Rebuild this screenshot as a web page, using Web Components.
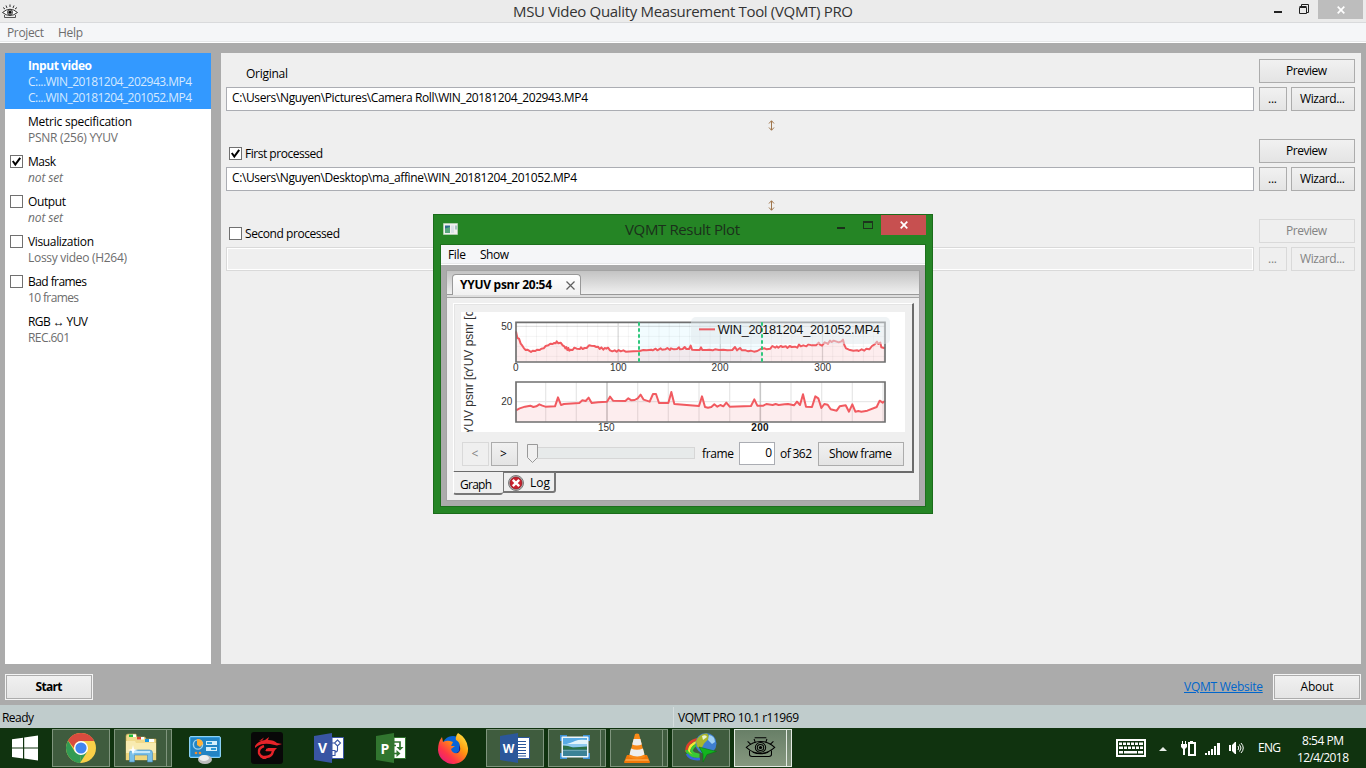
<!DOCTYPE html>
<html lang="en">
<head>
<meta charset="utf-8">
<title>MSU Video Quality Measurement Tool</title>
<style>
html,body{margin:0;padding:0;width:1366px;height:768px;overflow:hidden}
body{font:12px/16px "Open Sans","Noto Sans",sans-serif;color:#000}
</style>
</head>
<body>
<vq-app></vq-app>
<script>
const make = (tag, css, html) => customElements.define(tag, class extends HTMLElement {
  constructor() {
    super();
    this.attachShadow({mode: 'open'}).innerHTML =
      `<style>*{box-sizing:border-box}${css}</style>` + (typeof html === 'function' ? html(this) : html);
  }
});
const pending = [];

/* Text that is tracked to a set advance width. */
customElements.define('vq-text', class extends HTMLElement {
  constructor() {
    super();
    this.attachShadow({mode: 'open'}).innerHTML = '<style>:host{display:inline-block;white-space:pre;flex:none}</style><slot></slot>';
    pending.push(this);
  }
  fit() {
    const w = +this.getAttribute('w'), n = this.textContent.length;
    if (!w || n < 2) return;
    this.style.letterSpacing = (w - this.getBoundingClientRect().width) / (n - 1) + 'px';
    this.style.width = w + 'px';
  }
});

const ICONS = {
  eye: [48, 40, `<g fill="none" stroke="#000" stroke-width="1.6"><path d="M2 19Q12 9 24 9T46 19Q36 29 24 29T2 19Z"/><path d="M7 24v7q0 3 4 3h26q4 0 4-3v-7M4 9l5 5M14 5l2 6M34 5l-2 6M44 9l-5 5M15 3h18"/><circle cx="24" cy="19" r="8"/><circle cx="24" cy="19" r="5"/><path d="M12 27q12 5 24 0"/></g><circle cx="24" cy="19" r="2.500"/>`],
  logo: [16, 15, `<path fill="#fff" d="M1 8.500q7-7 14 0-7 6-14 0Z"/><path fill="none" stroke="#333" stroke-width="1" d="M.5 8.500Q8 2 15.500 8.500 8 14.500.500 8.500ZM1 3.500l2 1.500M4 1.500l1 2.500M8 .500V3M12 1.500 11 4M15 3.500 13 5"/><path fill="none" stroke="#555" d="M2.500 11v2.500h11V11"/><circle cx="8" cy="8.300" r="2.600" fill="#aaa" stroke="#222" stroke-width=".7"/><circle cx="8" cy="8.300" r="1.400"/>`],
  win: [26, 26, `<path fill="#fff" d="M0 4.200 11 2.700V12.400H0ZM12.200 2.500 26 .500V12.400H12.200ZM0 13.600H11V23.500L0 21.900ZM12.200 13.600H26V25.500L12.200 23.600Z"/>`],
  chrome: [30, 30, `<circle cx="15" cy="15" r="15" fill="#f9d048"/><path fill="#329b54" d="M2 7.500 9 19 15 22 14 30A15 15 0 0 1 2 7.500Z"/><path fill="#329b54" d="m14 30 7-11-6 2Z"/><path fill="#d84b3e" d="M2 7.500A15 15 0 0 1 28.200 8H15Q8 9 8 15Z"/><circle cx="15" cy="15" r="7" fill="#fff"/><circle cx="15" cy="15" r="5.600" fill="#4286f0"/>`],
  folder: [32, 30, `<path fill="#f0da8c" stroke="#b9a04d" stroke-width=".6" d="M1 3q0-2 2-2h8l1 3h8l1 2h10V27H1Z"/><path fill="#fff" d="M4 1.500h7V4H4ZM12 4h7v2.500h-7ZM20 6h9v3h-9Z"/><path fill="#20bd3a" d="M4 1.500h4V4H4Z"/><path fill="#dc4530" d="M12 4h4v2.500h-4Z"/><path fill="#1997dd" d="M20 6h4v3h-4Z"/><path fill="#f8ebb0" d="M1 8h9l1 2h20v17H1Z"/><path fill="#eed67d" d="M1 20h30v7H1Z"/><path fill="#79bfe8" stroke="#4588b8" stroke-width=".6" d="M4.500 20q0-3 3-3h17q3 0 3 3v9h-5v-7H9.500v7h-5Z"/><path fill="#c5e8fa" d="M7 18h18v2H7Z"/><path fill="#fff" d="m8 12 1 4 4 1-4 1-1 4-1-4-4-1 4-1Z"/>`],
  panel: [32, 28, `<rect x=".5" y=".5" width="31" height="21" rx="1.500" fill="#329add" stroke="#8bd1f4"/><rect x="2" y="2" width="28" height="18" fill="#2384c4"/><circle cx="9" cy="8.500" r="4.600" fill="none" stroke="#9fd2ee" stroke-width="1.400"/><path fill="#ffb038" d="M8 9V3a5 5 0 0 1 6 5l-3 3Z"/><path fill="#d5effb" d="M17 5h11v4H17ZM17 11h11v4H17Z"/><path fill="#2e9ad6" d="M18 6h5v2h-5ZM22 12h5v2h-5Z"/><circle cx="7" cy="17" r="1.300" fill="#f78d2b"/><circle cx="11" cy="17" r="1.300" fill="#f78d2b"/><ellipse cx="16" cy="23.500" rx="7" ry="4.500" fill="#bdbdbd"/><ellipse cx="15" cy="22" rx="5" ry="3" fill="#eee"/>`],
  garena: [32, 32, `<rect width="32" height="32" rx="3" fill="#080808"/><path fill="#e62329" d="M4 14Q7 9 14 8l4-3-1 3q6 0 9 3l5 1-5 1.500-7-1.500Q11 11 6.500 14l-2.500 2ZM8 9l5-3.500-2 3Z"/><path fill="none" stroke="#e62329" stroke-width="2.400" d="M13 14Q7 16 8 21q1 4 6 4t7-3l1.500-4H15"/><path fill="#e62329" d="m14 19 3-3h9l-3 3ZM9 25l3 2h4l-3-2Z"/>`],
  visio: [30, 30, `<path fill="#fff" stroke="#3955a3" d="M18 4.500h11.500v21H18Z"/><path fill="none" stroke="#3955a3" stroke-width="1.100" d="m23.500 7 3 3-3 3-3-3ZM17 17.500h4v5h-4M23.500 13v4q0 2-2.500 2M18 10h2.500"/><path fill="#3955a3" d="M0 3 18 0v30L0 27Z"/><text x="4" y="20" font-size="14" font-weight="700" fill="#fff">V</text>`],
  project: [30, 30, `<path fill="#fff" stroke="#31752f" d="M18 4.500h11.500v21H18Z"/><path fill="none" stroke="#31752f" stroke-width="1.700" d="M18 9h6v6M18 12.500h2M18 20.500h4"/><path fill="#31752f" d="m20.500 14 3.500 3.500 3.500-3.500ZM20.500 17v7l4-3.500Z"/><path fill="#31752f" d="M0 3 18 0v30L0 27Z"/><text x="4.500" y="20.500" font-size="14" font-weight="700" fill="#fff">P</text>`],
  firefox: [30, 31, `<defs><linearGradient id="f" x1="1" y1="0" x2=".1" y2="1"><stop stop-color="#fff44f"/><stop offset=".4" stop-color="#ff980e"/><stop offset=".72" stop-color="#ff3647"/><stop offset="1" stop-color="#e31587"/></linearGradient></defs><circle cx="15" cy="14" r="11" fill="#0a64d8"/><path fill="#29237c" d="M10 16q5 8 11 2v-6l4 8-9 7-9-6Z"/><path fill="url(#f)" d="M4 4 5 9Q9 7 12 8L15 9 13 13l4 0-4 3q1 5 7 4 3-2 2-6 0-5-4-7Q17 3 20 0q9 5 10 15a15 15 0 0 1-30 2Q0 9 4 4Z"/>`],
  word: [30, 30, `<path fill="#fff" stroke="#2b579a" d="M17 4.500h12.500v21H17Z"/><path stroke="#2b579a" stroke-width="1" d="M18 8.500h8M18 11.500h8M18 14.500h8M18 17.500h8M18 20.500h8M18 23h8"/><path fill="#2b579a" d="M0 3 18 0v30L0 27Z"/><text x="2.800" y="19.500" font-size="12" font-weight="700" fill="#fff">W</text>`],
  photo: [30, 26, `<path fill="#3d91d4" d="M0 1h7v6H0ZM23 1h7v6h-7ZM0 19h7v6H0ZM23 19h7v6h-7Z"/><rect x="1.500" y="2.500" width="27" height="21" rx="1" fill="#eef5f9"/><rect x="3" y="4" width="24" height="18" fill="#58abe4"/><path fill="#e3f4fb" d="M3 11q8-2 12-4t12-1v4H3Z"/><path fill="#8fcaf0" d="M3 10h24v3H3Z"/><path fill="#2c7045" d="M3 11.500q5 0 10 2l14-1v3.500H3Z"/><path fill="#3b8296" d="M3 15.500h24V22H3Z"/><path fill="#6aa3b2" d="M3 16h24v1H3Z"/>`],
  vlc: [26, 30, `<path fill="#f07808" d="M3 22h20l3 7q0 1-1 1H1q-1 0-1-1Z"/><path fill="#f98a18" d="M11 1q2-1 4 0l6 23q-8 4-16 0Z"/><path fill="#eee" d="m9.600 6h6.800l1.400 5.500q-5 2-9.600 0ZM7 15.500q6 2.500 12 0l1.500 6q-7 4-15 0Z"/><path fill="#ffb65f" d="M2 26h22l1 2H1Z" opacity=".6"/>`],
  idm: [32, 30, `<g fill="none" stroke-width="2.600"><path stroke="#e0402a" d="M13 6Q1 9 1.500 19"/><path stroke="#f5e934" d="M14 8.500Q4 11 4 19q1 3 6 4"/><path stroke="#39c935" d="M14 11Q7 13 6.500 18q1 3 8 4M1.500 17q1 6 13 7"/><path stroke="#3569dd" d="M2 21q3 6 13 5"/></g><circle cx="21" cy="10.500" r="10.500" fill="#3f7fd0"/><path fill="#a9b62c" d="M11 8q4-8 11-7.500 3 2 1 6l-4 4-3 6-4-3Z"/><path fill="#9fd0f4" d="M24 2q6 1 6 7l-3 2-4-4Z"/><path fill="#e9f3cf" d="M17 3q4-2 5 1l-4 3Z"/><path fill="#12b51e" stroke="#087512" stroke-width=".6" d="m14 14 17.500 4.500-9.500 3-4 7.500 0-8Z"/>`],
  keyboard: [30, 18, `<path fill="#fff" d="M0 0h30v18H0Z"/><path fill="#10330f" d="M2 2h26v14H2Z"/><path fill="#fff" d="M3 3.500h3v2.500H3zM7 3.500h3v2.500H7zM11 3.500h3v2.500h-3zM15 3.500h3v2.500h-3zM19 3.500h3v2.500h-3zM23 3.500h4v2.500h-4zM3 7.500h4v2.500H3zM8 7.500h3v2.500H8zM12 7.500h3v2.500h-3zM16 7.500h3v2.500h-3zM20 7.500h3v2.500h-3zM24 7.500h3v2.500h-3zM3 12h4v2.500H3zM8 12h13v2.500H8zM22 12h5v2.500h-5z"/>`],
  up: [8, 4, `<path fill="#e7eee7" d="M0 4 4 0l4 4Z"/>`],
  battery: [15, 16, `<path fill="#fff" d="M1 1h1v3h2V1h1v3h1v3L4 9v6H2V9L0 7V4h1ZM9 1h3v1h3v14H7V2h2Z"/><path fill="#10330f" d="M9 4h4v10H9Z"/>`],
  signal: [15, 12, `<path fill="#fff" d="M0 10h2v2H0zM3 8h2v4H3zM6 6h2v6H6zM9 3h2v9H9zM12 0h3v12h-3z"/>`],
  sound: [15, 14, `<path fill="#fff" d="M0 4h2v6H0ZM3 4 6 1h1v12H6L3 10Z"/><path fill="none" stroke="#fff" stroke-width="1" d="M9 5q1.500 2 0 4M10.500 3.500q3 3.500 0 7M12 2q4.500 5 0 10"/>`],
  min: [8, 2, `<path fill="currentColor" d="M0 0h8v2H0z"/>`],
  restore: [10, 10, `<path fill="none" stroke="#222" d="M.5 3.500h7v6h-7zM.5 2.500h7M2.500 2V.500h7V8.500H8"/>`],
  max: [10, 8, `<path fill="#1d331d" d="M0 0h10v8H0zM1 2v5h8V2z" fill-rule="evenodd"/>`],
  close: [8, 8, `<path stroke="#fff" stroke-width="1.700" d="m.7.700 6.600 6.600M7.300.700.700 7.300"/>`],
  tabx: [9, 9, `<path stroke="#606060" stroke-width="1.200" d="m.5.500 8 8M8.500.500l-8 8"/>`],
  app: [15, 12, `<path fill="#f1f1ef" stroke="#b9d0b9" stroke-width=".8" d="M.5.500h14v11H.5z"/><path fill="#2d6b8e" d="M2 2.500h5v7.500H2z"/><path fill="#56a67c" d="M2 5.500 7 4v6H2z"/><path fill="#dbe3e8" d="M8 2.500h3v7.500H8z"/><path fill="#a9c4c4" d="M12 2.500h2v4h-2z"/>`],
  error: [16, 16, `<circle cx="8" cy="8" r="7.500" fill="#b9b9b9" stroke="#7a7a7a"/><circle cx="8" cy="8" r="6" fill="#c9202d" stroke="#8a1620" stroke-width=".7"/><path stroke="#fff" stroke-width="2.400" d="m4.800 4.800 6.400 6.400M11.200 4.800l-6.400 6.400"/>`],
  thumb: [11, 19, `<path fill="#f0f0f0" stroke="#999" d="M.5.500h10v13l-5 5-5-5Z"/>`],
  updown: [7, 11, `<path fill="none" stroke="#a0764c" d="M3.500 1v9M1 3.500l2.500-2.800L6 3.500M1 7.500l2.500 2.800L6 7.500"/>`],
  check: [9, 9, `<path fill="none" stroke="#000" stroke-width="2" d="M.8 4 3.300 7.500 8.200.800"/>`],
};
make('vq-icon', ':host{display:block;flex:none}svg{display:block;overflow:visible;font-family:"Open Sans",sans-serif}', el => {
  const [w, h, body] = ICONS[el.getAttribute('name')];
  return `<svg width="${el.getAttribute('width') || w}" height="${el.getAttribute('height') || h}" viewBox="0 0 ${w} ${h}" preserveAspectRatio="none">${body}</svg>`;
});

make('vq-button', `:host{display:flex;box-sizing:border-box;height:24px;flex:none;align-items:center;justify-content:center;
  border:1px solid #acacac;background:linear-gradient(#f1f1f1,#e4e4e4);padding:0 1px 0 0}
  :host([disabled]){border-color:#d9d9d9;background:#efefef;color:#838383}
  :host([big]){height:26px;box-shadow:inset 0 0 0 1px #acacac;border-color:#f4f4f4;padding:0}`, '<slot></slot>');

make('vq-check', `:host{display:flex;box-sizing:border-box;width:13px;height:13px;border:1px solid #707070;background:#fff;flex:none;align-items:center;justify-content:center}`,
  el => el.hasAttribute('on') ? '<vq-icon name="check"></vq-icon>' : '');

make('vq-step', `:host{display:grid;grid-template-columns:18px 1fr;padding:5px 5px 3px;color:#000}
  :host([selected]){background:#3399ff;color:#fff;--sub:#d5e9ff}
  :host([selected]) .t{font-weight:700}
  .s{color:var(--sub,#6d6d6d)} vq-check{margin-top:1px}`, el => {
  const c = el.getAttribute('check');
  return `<div>${c ? `<vq-check ${c}></vq-check>` : ''}</div><div><div class="t"><slot name="t"></slot></div><div class="s"><slot></slot></div></div>`;
});

make('vq-source', `:host{display:grid;grid-template-columns:1028px 96px;column-gap:5px;row-gap:4px;height:80px;align-content:start}
  .l{display:flex;align-items:center;padding:6px 0 0 3px;height:24px;gap:3px}
  .l vq-check{margin-top:-1px}
  .f{height:24px;border:1px solid #abadb3;background:#fff;padding:2px 5px;line-height:16px}
  :host([off]) .f{background:#efefef;border-color:#d9d9d9;box-shadow:inset 0 0 0 1px #fff}
  .b{display:flex;gap:4px} .a{display:flex;justify-content:center;padding-left:62px;margin-top:5px}`, el => {
  const d = el.hasAttribute('off') ? 'disabled' : '', c = el.getAttribute('check');
  return `<div class="l">${c ? `<vq-check ${c}></vq-check>` : '<span style="width:14px"></span>'}<slot name="label"></slot></div>
  <vq-button ${d}><vq-text w="41">Preview</vq-text></vq-button>
  <div class="f"><slot></slot></div>
  <div class="b"><vq-button ${d} style="width:28px"><vq-text w="9">...</vq-text></vq-button><vq-button ${d} style="width:64px"><vq-text w="45">Wizard...</vq-text></vq-button></div>
  ${d ? '' : '<div class="a"><vq-icon name="updown"></vq-icon></div>'}`;
});

/* Overview chart and zoomed chart, drawn three units per pixel. */
const overview = "18,64 22,84 27,86 32,101 37,107 42,115 47,120 52,119 57,122 63,126 68,122 76,123 81,119 89,120 94,116 101,115 107,108 115,106 121,101 128,102 132,99 137,100 140,94 145,100 152,98 158,106 163,109 166,115 169,111 172,120 175,114 178,122 182,119 188,120 193,113 200,116 210,117 213,112 218,117 224,114 230,114 237,106 244,107 253,108 259,111 264,110 269,117 274,112 280,119 284,114 289,116 294,113 300,121 307,124 314,121 320,125 326,120 332,124 340,121 347,125 370,124 389,123 400,120 410,121 424,119 428,121 437,116 442,121 452,115 456,119 466,118 472,114 480,120 483,115 492,118 501,117 507,112 510,118 518,117 524,111 529,117 537,117 542,107 546,119 559,120 569,120 573,112 577,120 590,120 598,119 608,121 615,118 627,120 640,119 652,121 667,120 675,111 681,121 690,114 696,121 707,121 715,124 722,122 732,125 742,123 752,117 764,115 770,118 781,116 787,108 796,113 800,109 805,113 812,108 818,111 828,109 832,114 839,108 845,111 855,110 862,113 867,103 872,109 880,106 889,109 895,103 905,106 918,106 926,98 930,104 936,107 944,97 954,101 960,92 965,96 971,92 980,95 986,97 994,94 999,89 1003,105 1008,115 1017,119 1030,122 1042,121 1046,123 1055,118 1063,122 1069,116 1078,118 1086,108 1094,103 1101,95 1105,102 1111,98 1114,112 1125,115";
const detail = "18,301 29,295 45,290 61,287 70,291 79,289 88,283 97,287 106,290 135,289 144,262 153,285 162,282 208,279 217,271 227,273 236,263 245,279 264,277 291,275 300,260 309,272 346,273 355,265 364,271 374,270 383,265 392,254 401,269 419,275 429,252 438,252 447,279 475,279 484,246 493,282 567,288 576,259 585,291 594,293 604,291 613,283 622,290 631,285 640,289 649,278 659,290 723,288 733,268 742,287 760,287 769,282 788,285 797,282 806,285 824,283 834,282 852,286 861,275 870,285 879,253 888,290 906,291 916,259 925,265 934,294 943,282 953,284 962,298 980,302 989,289 1007,286 1017,305 1027,283 1036,305 1045,303 1054,305 1072,302 1100,291 1109,272 1118,278 1125,273";
const lines = (from, to, step, y1, y2) => { let d = ''; for (let x = from; x < to; x += step) d += `M${x.toFixed(1)} ${y1}V${y2}`; return d; };
make('vq-plot', ':host{display:block;width:444px;height:120px;background:#fff}svg{display:block}', `
<svg width="444" height="120" viewBox="-147 6 1332 360" font-family="Liberation Sans" font-size="30" fill="#333">
<defs><clipPath id="u"><path d="M-147 6H0V187H-147Z"/></clipPath><clipPath id="l"><path d="M-147 187H0V366H-147Z"/></clipPath></defs>
<path fill="#f2fcff" d="M387 38H756V155H387Z"/>
<path d="${lines(48.6, 1125, 30.65, 38, 155)}M18 79H1125M18 109H1125M18 139H1125" stroke="#000" stroke-opacity=".045" stroke-width="3" fill="none"/>
<path d="M18 49H1125M324.500 38V155M631 38V155M937.500 38V155" stroke="#000" stroke-opacity=".12" stroke-width="4" fill="none"/>
<path d="M${overview}V155H18Z" fill="#f15a60" fill-opacity=".11"/>
<polyline points="${overview}" fill="none" stroke="#f15a60" stroke-width="6" stroke-linejoin="round"/>
<path fill="none" stroke="#6f6f6f" stroke-width="5" d="M18 37H1125V156H18Z"/>
<rect x="543" y="21" width="597" height="81" rx="15" fill="#dfe8eb" fill-opacity=".5"/>
<path stroke="#2ec77b" stroke-width="6" stroke-dasharray="10 8" d="M387 37V156M756 37V156"/>
<path stroke="#ea5e65" stroke-width="6" d="M567 58H615"/>
<text x="623" y="72" font-size="38" textLength="487" fill="#111">WIN_20181204_201052.MP4</text>
<path d="${lines(107, 1120, 92, 216, 336)}M18 275H1125" stroke="#000" stroke-opacity=".09" stroke-width="4" fill="none"/>
<path d="M291 216V336M751 216V336" stroke="#000" stroke-opacity=".14" stroke-width="5"/>
<path d="M${detail}V336H18Z" fill="#f15a60" fill-opacity=".11"/>
<polyline points="${detail}" fill="none" stroke="#f15a60" stroke-width="6" stroke-linejoin="round"/>
<path fill="none" stroke="#6f6f6f" stroke-width="5" d="M18 216H1125V336H18Z"/>
<g text-anchor="middle"><text x="17" y="183">0</text><text x="325" y="183" textLength="50">100</text><text x="630" y="183" textLength="51">200</text><text x="938" y="183" textLength="51">300</text>
<text x="289" y="363" textLength="50">150</text><text x="750" y="363" textLength="52" font-weight="700" fill="#111">200</text></g>
<g text-anchor="end"><text x="7" y="60">50</text><text x="7" y="285">20</text></g>
<g font-size="36"><g clip-path="url(#u)"><text transform="translate(-110 217)rotate(-90)">YYUV psnr [dB]</text></g>
<g clip-path="url(#l)"><text transform="translate(-110 398)rotate(-90)">YYUV psnr [dB]</text></g></g>
</svg>`);

make('vq-result', `:host{position:absolute;left:433px;top:214px;width:500px;height:300px;box-sizing:border-box;border:1px solid #1b6c1b;background:#258525;display:flex;flex-direction:column;padding:0 7px 7px}
  .bar{height:30px;display:flex;padding-left:2px;margin-right:-1px;color:#1b301b;font-size:15px}
  .bar .ti{margin:4px 0 0 167px;line-height:20px}
  .x{width:45px;height:20px;background:#c75050;display:flex;align-items:center;justify-content:center;margin-left:8px}
  .body{flex:1;display:flex;flex-direction:column;background:#ababab;box-shadow:0 0 0 1px #1d6f1d}
  .menu{height:20px;background:#f5f6f8;border-bottom:1px solid #fff;box-shadow:inset 0 -1px #e8e9ea;padding:2px 7px;display:flex;gap:14px}
  .in{margin:6px;flex:1;background:#efefef;display:flex;flex-direction:column;box-shadow:0 0 0 1px #a3a3a3}
  .strip{height:24px;background:linear-gradient(#c3c3c3,#f0f0f0);border-bottom:1px solid #999;padding:3px 5px 0}
  .tab{width:129px;height:21px;border:1px solid #999;border-bottom:0;border-radius:4px 4px 0 0;background:linear-gradient(#fff,#f0f0f0);display:flex;align-items:center;gap:14px;padding-left:7px;font-weight:700}
  .ln{height:3px;background:#dedede;border-bottom:1px solid #a5a5a5}
  .pg{margin:5px 5px 0 6px;height:170px;border:1px solid #fff;border-right:2px solid #6b6b6b;border-bottom:2px solid #6b6b6b;padding:8px 7px 0;box-shadow:inset 1px 1px #e4e4e4}
  .ct{display:flex;align-items:center;margin-top:10px;height:24px;padding-left:1px}
  .tr{width:159px;height:12px;border:1px solid #d6d6d6;background:#e7eaea;margin:-3px 0 0 -2px}
  .n{width:36px;height:23px;border:1px solid #abadb3;background:#fff;text-align:right;padding:2px 2px 0 0;margin:-1px 5px 0 5px;font-size:12px}
  .tb{display:flex;padding-left:6px;align-items:flex-start}
  .g{width:50px;height:23px;border-bottom:2px solid #777;border-left:1px solid #fff;padding:5px 0 0 6px;background:#efefef;margin-top:-1px;border-radius:0 0 3px 3px}
  .lg{width:53px;height:21px;border:2px solid #777;border-top-width:1px;border-left-width:1px;display:flex;align-items:center;gap:6px;padding:2px 0 0 4px;margin-top:-1px;border-radius:0 0 3px 0}`,
`<div class="bar"><vq-icon name="app" style="margin-top:8px"></vq-icon><vq-text class="ti" w="115">VQMT Result Plot</vq-text>
<vq-icon name="min" style="margin:12px 0 0 97px"></vq-icon><vq-icon name="max" style="margin:6px 0 0 18px"></vq-icon><div class="x"><vq-icon name="close"></vq-icon></div></div>
<div class="body"><div class="menu"><vq-text w="18">File</vq-text><vq-text w="29">Show</vq-text></div>
<div class="in"><div class="strip"><div class="tab"><vq-text w="92">YYUV psnr 20:54</vq-text><vq-icon name="tabx"></vq-icon></div></div><div class="ln"></div>
<div class="pg"><vq-plot></vq-plot><div class="ct"><vq-button disabled style="width:27px">&lt;</vq-button><vq-button style="width:27px;margin-left:2px;padding-right:2px">&gt;</vq-button>
<vq-icon name="thumb" style="margin:-2px 0 0 9px;position:relative"></vq-icon><div class="tr"></div><vq-text w="32" style="margin-left:7px">frame</vq-text><div class="n">0</div><vq-text w="32">of 362</vq-text><vq-button style="width:86px;margin-left:6px"><vq-text w="63">Show frame</vq-text></vq-button></div></div>
<div class="tb"><div class="g"><vq-text w="32">Graph</vq-text></div><div class="lg"><vq-icon name="error"></vq-icon><vq-text w="20">Log</vq-text></div></div></div></div>`);

make('vq-task', `:host{display:flex;width:62px;height:40px;padding:1px 2px;box-sizing:border-box;flex:none}
  .m{flex:1;display:flex;align-items:center;justify-content:center;border:1px solid transparent}
  :host([open]) .m,.k{border:1px solid #7f957d;background:#3f5c3e}
  .k{width:5px;border-left:0}
  :host([active]) .m,:host([active]) .k{border-color:#e3eae2;background:linear-gradient(#687f67,#86987f)}
  `, el => `<div class="m"><slot></slot></div>${el.hasAttribute('stack') ? '<div class="k"></div>' : ''}`);

make('vq-taskbar', `:host{display:flex;height:40px;background:#10330f;color:#fff;align-items:center}
  .s{width:50px;padding-left:12px}.sp{flex:1}
  .c{display:flex;flex-direction:column;align-items:center;width:54px;margin-right:16px;line-height:17px;padding-top:1px}`,
`<div class="s"><vq-icon name="win"></vq-icon></div>
<vq-task open><vq-icon name="chrome"></vq-icon></vq-task><vq-task open stack><vq-icon name="folder"></vq-icon></vq-task>
<vq-task><vq-icon name="panel" style="margin:3px 0 0"></vq-icon></vq-task><vq-task><vq-icon name="garena"></vq-icon></vq-task>
<vq-task><vq-icon name="visio"></vq-icon></vq-task><vq-task><vq-icon name="project"></vq-icon></vq-task><vq-task><vq-icon name="firefox"></vq-icon></vq-task>
<vq-task open><vq-icon name="word"></vq-icon></vq-task><vq-task open stack><vq-icon name="photo" style="margin-top:-3px"></vq-icon></vq-task>
<vq-task open stack><vq-icon name="vlc"></vq-icon></vq-task><vq-task open><vq-icon name="idm"></vq-icon></vq-task>
<vq-task open active stack><vq-icon name="eye" width="31" height="24"></vq-icon></vq-task><div class="sp"></div>
<vq-icon name="keyboard"></vq-icon><vq-icon name="up" style="margin:2px 0 0 13px"></vq-icon><vq-icon name="battery" style="margin-left:14px"></vq-icon><vq-icon name="signal" style="margin:2px 0 0 9px"></vq-icon><vq-icon name="sound" style="margin-left:9px"></vq-icon>
<vq-text w="23" style="margin:0 15px 0 14px">ENG</vq-text><div class="c"><vq-text w="42">8:54 PM</vq-text><vq-text w="52">12/4/2018</vq-text></div>`);

make('vq-app', `:host{display:flex;flex-direction:column;width:1366px;height:768px;position:relative;background:#ababab;overflow:hidden}
  .bar{height:22px;background:#ebebeb;display:flex;align-items:flex-start;flex:none}
  .ti{font-size:15px;line-height:20px;margin:1px 0 0 495px;color:#333}
  .x{width:45px;height:19px;background:#bdbdbd;display:flex;align-items:center;justify-content:center;margin-left:9px}
  .menu{height:21px;background:#f5f6f8;border-top:1px solid #d9dadc;border-bottom:1px solid #fff;box-shadow:inset 0 -1px #e6e7e8;padding:2px 7px;display:flex;gap:14px;color:#6d6d6d;flex:none}
  .main{display:flex;gap:10px;padding:10px 5px 0;height:621px;flex:none}
  .l{width:206px;background:#fff}.r{flex:1;background:#efefef;padding:6px 5px 0}
  .act{display:flex;align-items:center;padding:5px 5px 0;height:41px;flex:none}
  a{color:#0066cc;text-decoration:underline;margin:0 10px 0 auto;display:flex}
  .st{height:23px;background:#c0cccc;display:flex;padding:5px 2px 0;flex:none}`,
`<div class="bar"><vq-icon name="logo" style="margin:4px 0 0 2px"></vq-icon><vq-text class="ti" w="340">MSU Video Quality Measurement Tool (VQMT) PRO</vq-text>
<vq-icon name="min" style="margin:11px 0 0 421px;color:#222"></vq-icon><vq-icon name="restore" style="margin:4px 0 0 17px"></vq-icon><div class="x"><vq-icon name="close"></vq-icon></div></div>
<div class="menu"><vq-text w="37">Project</vq-text><vq-text w="25">Help</vq-text></div>
<div class="main"><div class="l">
<vq-step selected><vq-text slot="t" w="64">Input video</vq-text><vq-text w="164">C:...WIN_20181204_202943.MP4</vq-text><br><vq-text w="164">C:...WIN_20181204_201052.MP4</vq-text></vq-step>
<vq-step><vq-text slot="t" w="104">Metric specification</vq-text><vq-text w="90">PSNR (256) YYUV</vq-text></vq-step>
<vq-step check="on"><vq-text slot="t" w="28">Mask</vq-text><vq-text w="35" style="font-style:italic">not set</vq-text></vq-step>
<vq-step check="off"><vq-text slot="t" w="38">Output</vq-text><vq-text w="35" style="font-style:italic">not set</vq-text></vq-step>
<vq-step check="off"><vq-text slot="t" w="66">Visualization</vq-text><vq-text w="99">Lossy video (H264)</vq-text></vq-step>
<vq-step check="off"><vq-text slot="t" w="59">Bad frames</vq-text><vq-text w="51">10 frames</vq-text></vq-step>
<vq-step><vq-text slot="t" w="60">RGB ↔ YUV</vq-text><vq-text w="42">REC.601</vq-text></vq-step>
</div><div class="r">
<vq-source><vq-text slot="label" w="42">Original</vq-text><vq-text w="356">C:\\Users\\Nguyen\\Pictures\\Camera Roll\\WIN_20181204_202943.MP4</vq-text></vq-source>
<vq-source check="on"><vq-text slot="label" w="78">First processed</vq-text><vq-text w="345">C:\\Users\\Nguyen\\Desktop\\ma_affine\\WIN_20181204_201052.MP4</vq-text></vq-source>
<vq-source check="off" off><vq-text slot="label" w="95">Second processed</vq-text></vq-source>
</div></div>
<div class="act"><vq-button big style="width:88px;font-weight:700"><vq-text w="27">Start</vq-text></vq-button><a><vq-text w="79">VQMT Website</vq-text></a><vq-button big style="width:88px"><vq-text w="33">About</vq-text></vq-button></div>
<div class="st"><vq-text w="32">Ready</vq-text><span style="width:1px;height:20px;background:#d5dddd;margin:-3px 4px 0 639px"></span><vq-text w="121">VQMT PRO 10.1 r11969</vq-text></div>
<vq-taskbar></vq-taskbar><vq-result></vq-result>`);
pending.forEach(t => t.fit());
</script>
</body>
</html>
